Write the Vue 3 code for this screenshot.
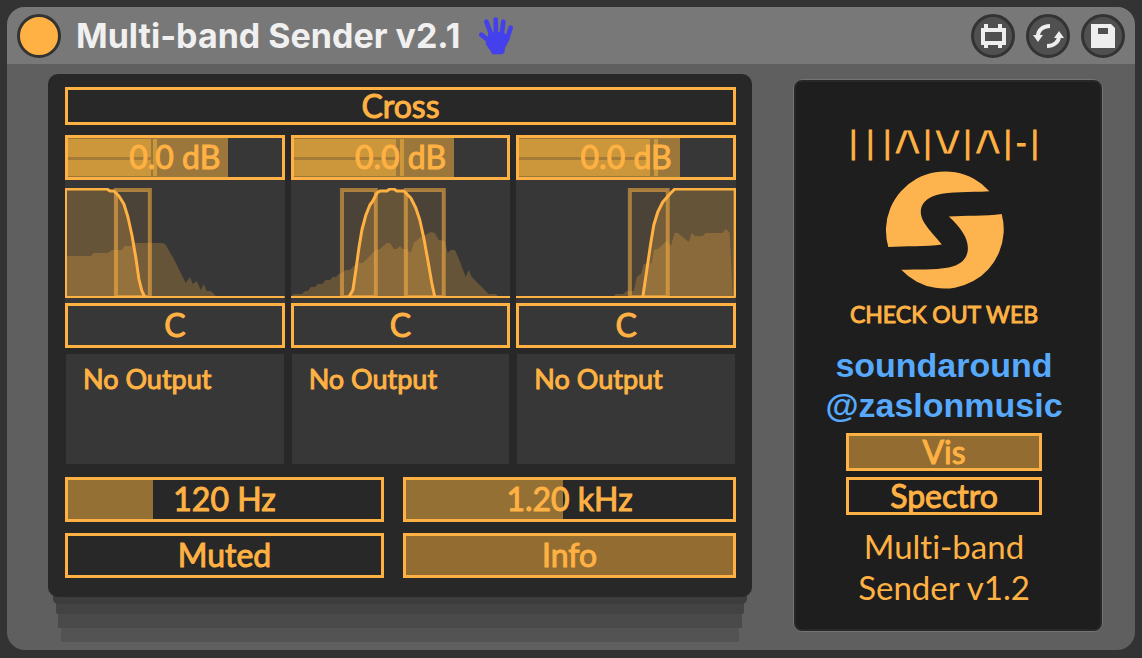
<template>
  <main class="device">
    <header class="title-bar">
      <button class="power" aria-label="Device on"></button>
      <h1>Multi-band Sender v2.1</h1>
      <svg class="hand" viewBox="0 0 102 112" aria-hidden="true">
        <path d="M28 50 L52 42 L88 52 L92 66 L78 92 L77 104 L71 111 L40 111 L36 103 L20 80 Z" />
        <path class="finger" d="M7 52 L32 72 M22 13 L38 55 M50 7 L51 55 M73 13 L68 55 M95 31 L84 65" />
      </svg>
      <div class="tools">
        <button class="tool" aria-label="Edit device">
          <svg viewBox="-20 -20 40 40">
            <path class="line" d="M-10 -6 H11 V7 H-10 Z M-7 -12 V-6 M7 -12 V-6 M-7 7 V12 M7 7 V12" />
          </svg>
        </button>
        <button class="tool" aria-label="Hot-swap">
          <svg viewBox="-20 -20 40 40">
            <path class="line" d="M2 -10 C-6 -10 -10 -5 -10 0 M-1 10 C7 10 11 5 11 0" />
            <path d="M-15 -1 H-5 L-10 6 Z M6 2 H16 L11 -5 Z" />
          </svg>
        </button>
        <button class="tool" aria-label="Save preset">
          <svg viewBox="-20 -20 40 40">
            <path fill-rule="evenodd" d="M-12 -12 H8 L12 -8 V12 H-12 Z M-5 -8 V-2 H5 V-8 Z" />
          </svg>
        </button>
      </div>
    </header>

    <div class="body">
      <section class="panel">
        <button class="box short">Cross</button>

        <div class="bands">
          <div v-for="band in bands" :key="band.id" class="band">
            <div class="strip">
              <label class="box dial">
                <span class="fill gain" :style="{ width: band.gain + '%' }"></span>
                <span class="meter" :style="{ width: band.meter + '%' }"></span>
                <span class="peak" :style="{ left: band.peak + '%' }"></span>
                <span class="value">0.0 dB</span>
                <input type="range" min="0" max="100" :value="band.gain" :aria-label="band.id + ' gain'">
              </label>
              <svg class="graph" viewBox="0 0 220 110" preserveAspectRatio="none">
                <polygon class="area" :points="band.spectrum" />
                <polygon class="area" :points="band.curve" />
                <rect
                  v-for="zone in band.zones"
                  :key="zone.x"
                  class="zone"
                  :x="zone.x + 2"
                  y="2"
                  :width="zone.w - 4"
                  height="107"
                />
                <polyline class="curve" :points="band.curve" />
                <path class="edge" d="M0 109 H220" />
                <path v-if="band.edge" class="edge" :d="band.edge" />
              </svg>
              <label class="box dial">
                <span class="value">C</span>
                <input type="range" min="-50" max="50" value="0" :aria-label="band.id + ' pan'">
              </label>
            </div>
            <div class="output">
              <select :aria-label="band.id + ' output'">
                <option>No Output</option>
              </select>
            </div>
          </div>
        </div>

        <div class="controls">
          <div class="column">
            <label class="box dial">
              <span class="fill" :style="{ width: '27%' }"></span>
              <span class="value">120 Hz</span>
              <input type="range" min="0" max="100" value="27" aria-label="Low crossover">
            </label>
            <button class="box">Muted</button>
          </div>
          <div class="column">
            <label class="box dial">
              <span class="fill" :style="{ width: '48%' }"></span>
              <span class="value">1.20 kHz</span>
              <input type="range" min="0" max="100" value="48" aria-label="High crossover">
            </label>
            <button class="box active">Info</button>
          </div>
        </div>
      </section>

      <aside class="side">
        <p class="brand">|||/\|\/|/\|-|</p>
        <svg class="logo" viewBox="314 211 356 358" aria-hidden="true">
          <path d="M627 275 A178 178 0 0 0 323 443 C370 439 440 442 484 435 C467 413 446 393 432 371 C407 332 425 298 468 286 C510 275 565 279 627 275 Z" />
          <path d="M664 343 A178 178 0 0 1 362 511 C410 509 460 512 505 504 C558 494 574 456 554 412 C543 389 524 369 505 351 C555 346 615 351 664 343 Z" />
        </svg>
        <p class="caption">CHECK OUT WEB</p>
        <nav class="links">
          <a href="#soundaround">soundaround</a>
          <a href="#zaslonmusic">@zaslonmusic</a>
        </nav>
        <div class="views">
          <button class="box short active">Vis</button>
          <button class="box short">Spectro</button>
        </div>
        <p class="version">Multi-band<br>Sender v1.2</p>
      </aside>
    </div>
  </main>
</template>

<script setup>
const bands = [
  {
    id: 'Low',
    gain: 75,
    meter: 39,
    peak: 40,
    zones: [{ x: 49, w: 38 }],
    edge: 'M1 109 V1',
    curve: '0,109 0,1 42,1 45,3 49,3 54,8 59,16 63,29 67,47 71,70 74,91 77,103 80,109',
    spectrum: '0,108 0,68 26,68 29,65 43,65 47,62 57,62 60,58 67,58 70,55 98,55 101,57 106,66 108,69 121,95 125,89 128,96 132,93 136,102 139,96 142,103 146,103 151,108'
  },
  {
    id: 'Mid',
    gain: 75,
    meter: 48,
    peak: 50,
    zones: [{ x: 49, w: 38 }, { x: 113, w: 42 }],
    edge: '',
    curve: '58,109 62,102 65,82 68,60 71,42 75,27 79,17 82,13 86,5 89,3 96,3 99,1 103,1 106,3 113,3 120,10 125,20 129,32 133,50 137,72 141,95 144,109',
    spectrum: '0,108 3,106 11,106 14,103 17,103 20,99 24,99 27,96 31,96 35,92 39,92 42,89 45,89 48,86 51,85 55,82 59,82 63,78 68,75 72,75 75,72 85,62 89,61 96,55 99,55 103,61 106,61 109,58 112,61 116,61 120,65 123,55 130,49 135,47 140,44 144,45 148,52 154,53 157,65 160,62 164,62 167,68 175,89 178,82 181,89 198,106 205,106 207,108'
  },
  {
    id: 'High',
    gain: 75,
    meter: 61,
    peak: 63,
    zones: [{ x: 112, w: 42 }],
    edge: 'M219 109 V1',
    curve: '127,109 131,82 135,55 138,37 142,24 147,14 155,5 159,1 220,1 220,109',
    spectrum: '98,108 100,106 107,106 111,103 118,103 121,89 125,86 128,76 131,76 136,75 138,62 142,61 151,53 155,58 159,45 162,45 173,54 176,45 179,48 187,48 190,45 207,45 210,41 214,45 217,108'
  }
]
</script>

<style>
body {
  margin: 0;
  background: #333;
}
</style>

<style scoped>
.device {
  box-sizing: border-box;
  min-height: 643px;
  margin: 7px 7px 8px;
  border-radius: 18px;
  overflow: hidden;
  background: #5f5f5f;
  color: #ffb243;
  font-family: Lato, 'Open Sans', sans-serif;
  font-size: 32px;
  font-variant-ligatures: none;
}

.title-bar {
  display: flex;
  align-items: center;
  box-sizing: border-box;
  height: 57px;
  padding: 0 10px;
  background: #787878;
}

h1 {
  margin: 0 19px 0 15px;
  color: #f0f0f0;
  font-family: Inter, sans-serif;
  font-size: 34px;
  font-weight: 700;
  line-height: 40px;
}

.power {
  box-sizing: border-box;
  width: 44px;
  height: 44px;
  padding: 0;
  border: 3px solid #333;
  border-radius: 50%;
  background: #ffb243;
}

.hand {
  width: 34px;
  height: 38px;
  fill: #4340ec;
}

.finger {
  fill: none;
  stroke: #4340ec;
  stroke-width: 14;
  stroke-linecap: round;
}

.tools {
  display: flex;
  gap: 11px;
  margin-left: auto;
}

.tool {
  box-sizing: border-box;
  width: 44px;
  height: 44px;
  padding: 0;
  border: 3px solid #333;
  border-radius: 50%;
  background: #505050;
}

.tool svg {
  display: block;
  width: 40px;
  height: 40px;
  margin: -1px;
  fill: #eee;
}

.tool .line {
  fill: none;
  stroke: #eee;
  stroke-width: 4;
}

.body {
  display: grid;
  grid-template-columns: 704fr 310fr;
  align-items: start;
  gap: 41px;
  padding: 10px 32px 0 41px;
}

.panel {
  padding: 13px 16px 19px 17px;
  border-radius: 10px;
  background: #282828;
  box-shadow:
    0 12px 0 -5px #3d3d3d,
    0 25px 0 -8px #434343,
    0 41px 0 -10px #4a4a4a,
    0 58px 0 -13px #535353;
}

.box {
  display: flex;
  align-items: center;
  justify-content: center;
  position: relative;
  box-sizing: border-box;
  width: 100%;
  height: 45px;
  padding: 0 0 2px;
  border: 3px solid #ffb243;
  background: transparent;
  color: #ffb243;
  font: inherit;
  line-height: 30px;
  -webkit-text-stroke: 1px #ffb243;
}

.short {
  height: 38px;
  padding: 0;
}

.active {
  background: #926c30;
}

.dial input {
  position: absolute;
  inset: 0;
  width: 100%;
  height: 100%;
  margin: 0;
  opacity: 0;
}

.value {
  position: relative;
}

.fill {
  position: absolute;
  left: 0;
  top: 0;
  bottom: 0;
  background: #957035;
}

.gain {
  background: #9c773c;
}

.meter {
  position: absolute;
  left: 0;
  top: 1px;
  bottom: 1px;
  background: linear-gradient(#cc963b 18px, #a67b37 18px, #a67b37 21px, #cc963b 21px);
}

.peak {
  position: absolute;
  top: 1px;
  bottom: 1px;
  width: 4px;
  background: #cc963b;
}

.bands {
  display: grid;
  grid-template-columns: repeat(3, 1fr);
  gap: 6px;
  margin-top: 10px;
}

.strip {
  background: #373737;
}

.graph {
  display: block;
  width: 100%;
  height: 110px;
  padding: 8px 0 5px;
}

.area {
  fill: #ffb243;
  fill-opacity: 0.24;
}

.zone {
  fill: #ffb243;
  fill-opacity: 0.1;
  stroke: #ffb243;
  stroke-opacity: 0.55;
  stroke-width: 4;
}

.curve {
  fill: none;
  stroke: #ffb243;
  stroke-width: 3;
  stroke-linejoin: round;
}

.edge {
  fill: none;
  stroke: #ffb243;
  stroke-width: 2;
}

.output {
  box-sizing: border-box;
  height: 110px;
  margin: 6px 1px 0;
  padding: 3px 17px;
  background: #373737;
}

.output select {
  appearance: none;
  width: 100%;
  padding: 0;
  border: 0;
  background: transparent;
  color: #ffb243;
  font: inherit;
  font-size: 27px;
  line-height: 34px;
  -webkit-text-stroke: 1px #ffb243;
}

.controls {
  display: grid;
  grid-template-columns: 319fr 333fr;
  gap: 19px;
  margin-top: 13px;
}

.column {
  display: flex;
  flex-direction: column;
  gap: 11px;
}

.side {
  display: flex;
  flex-direction: column;
  align-items: center;
  margin-top: 5px;
  padding: 40px 8px 23px 0;
  border: 1px solid #747474;
  border-radius: 9px;
  background: #1e1e1e;
  box-shadow: inset 0 0 0 2px #282828;
  text-align: center;
}

.side p {
  margin: 0;
}

.brand {
  font-family: 'Noto Sans', sans-serif;
  font-size: 31px;
  font-kerning: none;
  line-height: 43px;
  -webkit-text-stroke: 1px #ffb243;
}

.logo {
  width: 119px;
  height: 119px;
  margin: 7px 0 10px;
  fill: #fdb44e;
}

.side .caption {
  font-size: 23px;
  line-height: 30px;
  -webkit-text-stroke: 1px #ffb243;
}

.links {
  display: flex;
  flex-direction: column;
  margin: 16px 0 8px;
  font-family: 'Liberation Sans', Arial, sans-serif;
  font-size: 34px;
  font-weight: 700;
  line-height: 40px;
}

.links a {
  color: #57a9fb;
  text-decoration: none;
}

.views {
  display: flex;
  flex-direction: column;
  gap: 6px;
  width: 196px;
}

.side .version {
  margin-top: 11px;
  font-size: 33px;
  line-height: 41px;
}
</style>
